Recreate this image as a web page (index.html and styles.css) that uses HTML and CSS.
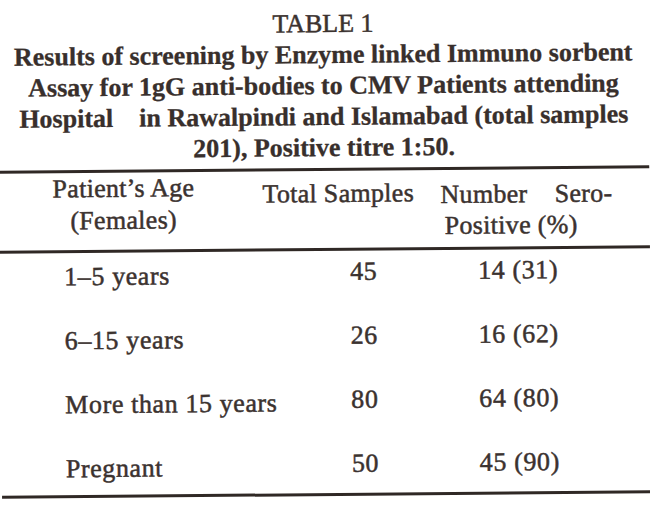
FILE: index.html
```html
<!DOCTYPE html>
<html lang="en">
<head>
<meta charset="utf-8">
<title>Table 1</title>
<link rel="stylesheet" href="styles.css">
</head>
<body>
<div class="page">
  <header class="caption">
    <div class="caption-no">TABLE 1</div>
    <div class="caption-title">
      <div>Results of screening by Enzyme linked Immuno sorbent</div>
      <div>Assay for 1gG anti-bodies to CMV Patients attending</div>
      <div>Hospital&nbsp;&nbsp;&nbsp; in Rawalpindi and Islamabad (total samples</div>
      <div>201), Positive titre 1:50.</div>
    </div>
  </header>
  <div class="table">
    <div class="row head">
      <div class="cell age-head">Patient’s Age<br>(Females)</div>
      <div class="cell total-head">Total Samples</div>
      <div class="cell pos-head">
        <div class="split"><span>Number</span><span>Sero-</span></div>
        <div class="pos-line">Positive (%)</div>
      </div>
    </div>
    <div class="tbody">
      <div class="row item">
        <div class="cell age">1–5 years</div>
        <div class="cell total">45</div>
        <div class="cell pos">14 (31)</div>
      </div>
      <div class="row item">
        <div class="cell age">6–15 years</div>
        <div class="cell total">26</div>
        <div class="cell pos">16 (62)</div>
      </div>
      <div class="row item">
        <div class="cell age">More than 15 years</div>
        <div class="cell total">80</div>
        <div class="cell pos">64 (80)</div>
      </div>
      <div class="row item last">
        <div class="cell age">Pregnant</div>
        <div class="cell total">50</div>
        <div class="cell pos">45 (90)</div>
      </div>
    </div>
  </div>
</div>
</body>
</html>
```

FILE: styles.css
```css
html, body {
  margin: 0;
  padding: 0;
  background: #ffffff;
}

body {
  width: 650px;
  height: 514px;
  overflow: hidden;
  font-family: "Liberation Serif", "Times New Roman", serif;
  color: #3b322f;
}

.page {
  width: 650px;
  height: 514px;
  padding-top: 8px;
  box-sizing: border-box;
  transform: rotate(-0.5deg);
  transform-origin: 325px 257px;
  -webkit-text-stroke: 0.5px #3b322f;
}

.caption {
  text-align: center;
  font-size: 26px;
  line-height: 31px;
  white-space: nowrap;
}

.caption-no {
  font-weight: normal;
}

.caption-title {
  font-weight: bold;
  color: #382f2c;
  -webkit-text-stroke: 0.3px #382f2c;
}

.table {
  margin-top: 5px;
  border-top: 3px solid #2f2825;
  font-size: 26px;
}

.row {
  display: grid;
  grid-template-columns: 248px 182px 1fr;
  align-items: start;
}

.cell {
  white-space: nowrap;
}

.head {
  height: 77px;
  line-height: 32px;
  letter-spacing: 0.3px;
}

.age-head {
  text-align: center;
}

.total-head {
  padding: 7px 0 0 15px;
}

.pos-head {
  padding: 9px 0 0 11px;
  line-height: 31px;
}

.split {
  width: 172px;
  display: flex;
  justify-content: space-between;
}

.pos-line {
  padding-left: 4px;
}

.tbody {
  border-top: 3px solid #2f2825;
  border-bottom: 3px solid #2f2825;
}

.item {
  height: 64px;
  line-height: 32px;
  letter-spacing: 0.6px;
}

.item.last {
  height: 49.5px;
}

.age {
  padding: 7.5px 0 0 64px;
}

.total {
  padding: 5px 0 0 102px;
}

.pos {
  padding: 5px 0 0 48px;
}
```
